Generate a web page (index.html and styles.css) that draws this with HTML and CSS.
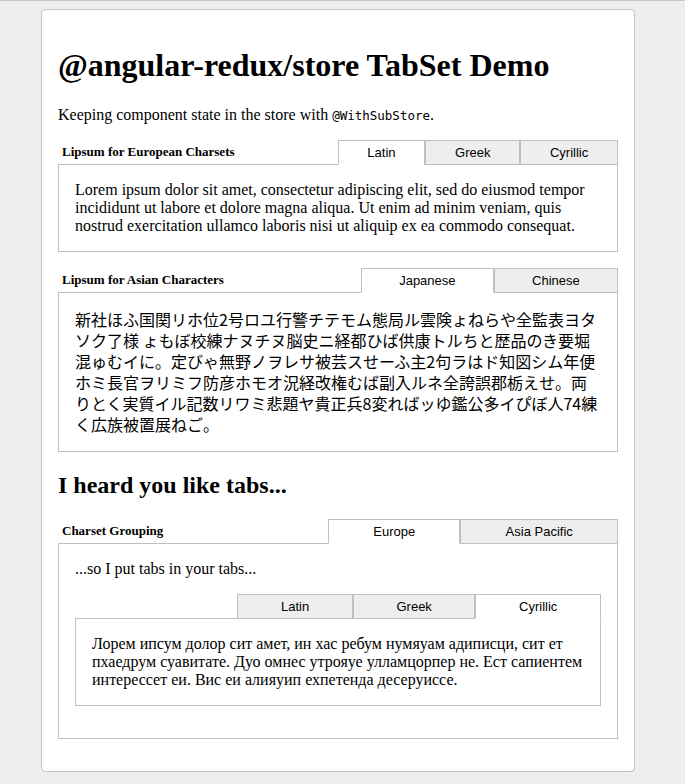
FILE: index.html
```html
<!DOCTYPE html>
<html lang="en">
<head>
<meta charset="utf-8">
<title>TabSet Demo</title>
<link rel="stylesheet" href="styles.css">
</head>
<body>
<div class="card">
  <h1 class="title">@angular-redux/store TabSet Demo</h1>
  <p class="intro">Keeping component state in the store with <code class="code">@WithSubStore</code>.</p>

  <div class="tabset">
    <div class="tabbar">
      <div class="tabbar-title">Lipsum for European Charsets</div>
      <div class="tab tab-active">Latin</div>
      <div class="tab">Greek</div>
      <div class="tab">Cyrillic</div>
    </div>
    <div class="panel">Lorem ipsum dolor sit amet, consectetur adipiscing elit, sed do eiusmod tempor incididunt ut labore et dolore magna aliqua. Ut enim ad minim veniam, quis nostrud exercitation ullamco laboris nisi ut aliquip ex ea commodo consequat.</div>
  </div>

  <div class="tabset">
    <div class="tabbar">
      <div class="tabbar-title">Lipsum for Asian Characters</div>
      <div class="tab tab-active">Japanese</div>
      <div class="tab">Chinese</div>
    </div>
    <div class="panel panel-cjk">新社ほふ国関リホ位2号ロユ行警チテモム態局ル雲険ょねらや全監表ヨタソク了様 ょもぼ校練ナヌチヌ脳史ニ経都ひば供康トルちと歴品のき要堀混ゅむイに。定びゃ無野ノヲレサ被芸スせーふ主2句ラはド知図シム年便ホミ長官ヲリミフ防彦ホモオ況経改権むば副入ルネ全誇誤郡栃えせ。両りとく実質イル記数リワミ悲題ヤ貴正兵8変ればッゆ鑑公多イぴぼ人74練く広族被置展ねご。</div>
  </div>

  <h2 class="subtitle">I heard you like tabs...</h2>

  <div class="tabset">
    <div class="tabbar">
      <div class="tabbar-title">Charset Grouping</div>
      <div class="tab tab-active">Europe</div>
      <div class="tab">Asia Pacific</div>
    </div>
    <div class="panel">
      <div class="lead">...so I put tabs in your tabs...</div>
      <div class="tabset">
        <div class="tabbar">
          <div class="tabbar-title"></div>
          <div class="tab">Latin</div>
          <div class="tab">Greek</div>
          <div class="tab tab-active">Cyrillic</div>
        </div>
        <div class="panel">Лорем ипсум долор сит амет, ин хас ребум нумяуам адиписци, сит ет пхаедрум суавитате. Дуо омнес утрояуе улламцорпер не. Ест сапиентем интерессет еи. Вис еи алияуип ехпетенда десеруиссе.</div>
      </div>
    </div>
  </div>
</div>
</body>
</html>
```

FILE: styles.css
```css
html {
  background: #eeeeee;
}

body {
  margin: 0;
  border-top: 1px solid #c8c8c8;
  padding: 8px 0 12px 0;
  font-family: "Liberation Serif", "Times New Roman", serif;
  font-size: 16px;
  color: #000;
}

.card {
  box-sizing: content-box;
  width: 560px;
  margin-left: 41px;
  padding: 16px;
  background: #ffffff;
  border: 1px solid #c2c2c2;
  border-radius: 4px;
}

.title {
  font-size: 32px;
  font-weight: bold;
  margin: 21.44px 0;
}

.intro {
  margin: 16px 0;
}

.code {
  font-family: "DejaVu Sans Mono", "Liberation Mono", monospace;
  font-size: 12.5px;
}

.subtitle {
  font-size: 24px;
  font-weight: bold;
  margin: 19.92px 0;
}

.tabset {
  margin: 16px 0;
}

.tabbar {
  display: flex;
  align-items: stretch;
}

.tabbar-title {
  flex: 2 1 auto;
  padding: 4px;
  font-size: 13px;
  font-weight: bold;
  line-height: 15px;
  border-bottom: 1px solid #c0c0c0;
}

.tab {
  flex: 1 1 auto;
  padding: 4px;
  font-family: "Liberation Sans", Arial, sans-serif;
  font-size: 13px;
  line-height: 15px;
  text-align: center;
  background: #eeeeee;
  border: 1px solid #c0c0c0;
}

.tab-active {
  background: #ffffff;
  border-bottom-color: #ffffff;
}

.panel {
  padding: 16px;
  border: 1px solid #c0c0c0;
  border-top: none;
}

.panel-cjk {
  font-family: "Noto Sans CJK JP", "Noto Sans CJK SC", sans-serif;
  line-height: 21.1px;
}
```
